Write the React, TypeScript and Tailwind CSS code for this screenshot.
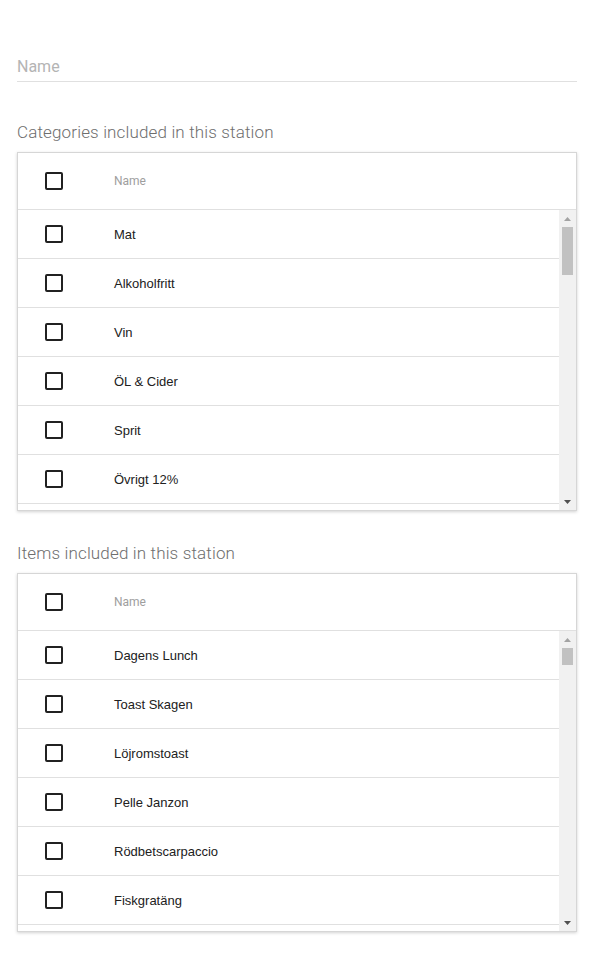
import React from "react";

const categories = ["Mat", "Alkoholfritt", "Vin", "ÖL & Cider", "Sprit", "Övrigt 12%", "Övrigt 25%"];
const items = ["Dagens Lunch", "Toast Skagen", "Löjromstoast", "Pelle Janzon", "Rödbetscarpaccio", "Fiskgratäng", "Köttbullar"];

const Checkbox = () => (
  <span className="block w-[18px] h-[18px] border-2 border-[#212121] rounded-[2px] shrink-0" />
);

const FakeScrollbar = ({ thumb }: { thumb: number }) => (
  <div className="w-[17px] bg-[#f1f1f1] flex flex-col shrink-0">
    <div className="h-[17px] flex items-center justify-center">
      <svg width="7" height="4" viewBox="0 0 7 4">
        <path d="M3.5 0 L7 4 L0 4 Z" fill="#a3a3a3" />
      </svg>
    </div>
    <div className="flex-1 px-[3px]">
      <div className="bg-[#c1c1c1]" style={{ height: thumb }} />
    </div>
    <div className="h-[17px] flex items-center justify-center">
      <svg width="7" height="4" viewBox="0 0 7 4">
        <path d="M0 0 L7 0 L3.5 4 Z" fill="#505050" />
      </svg>
    </div>
  </div>
);

const SelectTable = ({ rows, thumb }: { rows: string[]; thumb: number }) => {
  return (
    <div className="border border-[#d6d6d6] bg-white shadow-[0_1px_3px_rgba(0,0,0,0.18)]">
      <div className="h-[57px] flex items-center pl-[27px] border-b border-[#e0e0e0]">
        <Checkbox />
        <span className="ml-[51px] text-[12px] text-[#9e9e9e] font-['Roboto',sans-serif]">
          Name
        </span>
      </div>

      <div className="flex h-[300px]">
        <div className="flex-1 overflow-hidden">
          {rows.map((row) => (
            <div
              key={row}
              className="h-[49px] flex items-center pl-[27px] border-b border-[#e0e0e0]"
            >
              <Checkbox />
              <span className="ml-[51px] pt-[1px] text-[13px] text-[#212121] font-['Liberation_Sans',Arial,sans-serif]">
                {row}
              </span>
            </div>
          ))}
        </div>
        <FakeScrollbar thumb={thumb} />
      </div>
    </div>
  );
};

export default function App() {
  return (
    <div className="bg-white min-h-[962px] pl-[17px] pr-[19px] pt-[55px] pb-[30px] font-['Roboto',sans-serif]">
      <div className="border-b border-[#e0e0e0] pb-[2px]">
        <p className="text-[16px] leading-[24px] text-[#b4b4b4]">Name</p>
      </div>

      <p className="mt-[38px] mb-[8px] text-[17px] leading-[24px] tracking-[0.15px] font-light text-[#6e6e6e]">
        Categories included in this station
      </p>
      <SelectTable rows={categories} thumb={48} />

      <p className="mt-[30px] mb-[8px] text-[17px] leading-[24px] tracking-[0.15px] font-light text-[#6e6e6e]">
        Items included in this station
      </p>
      <SelectTable rows={items} thumb={17} />
    </div>
  );
}
